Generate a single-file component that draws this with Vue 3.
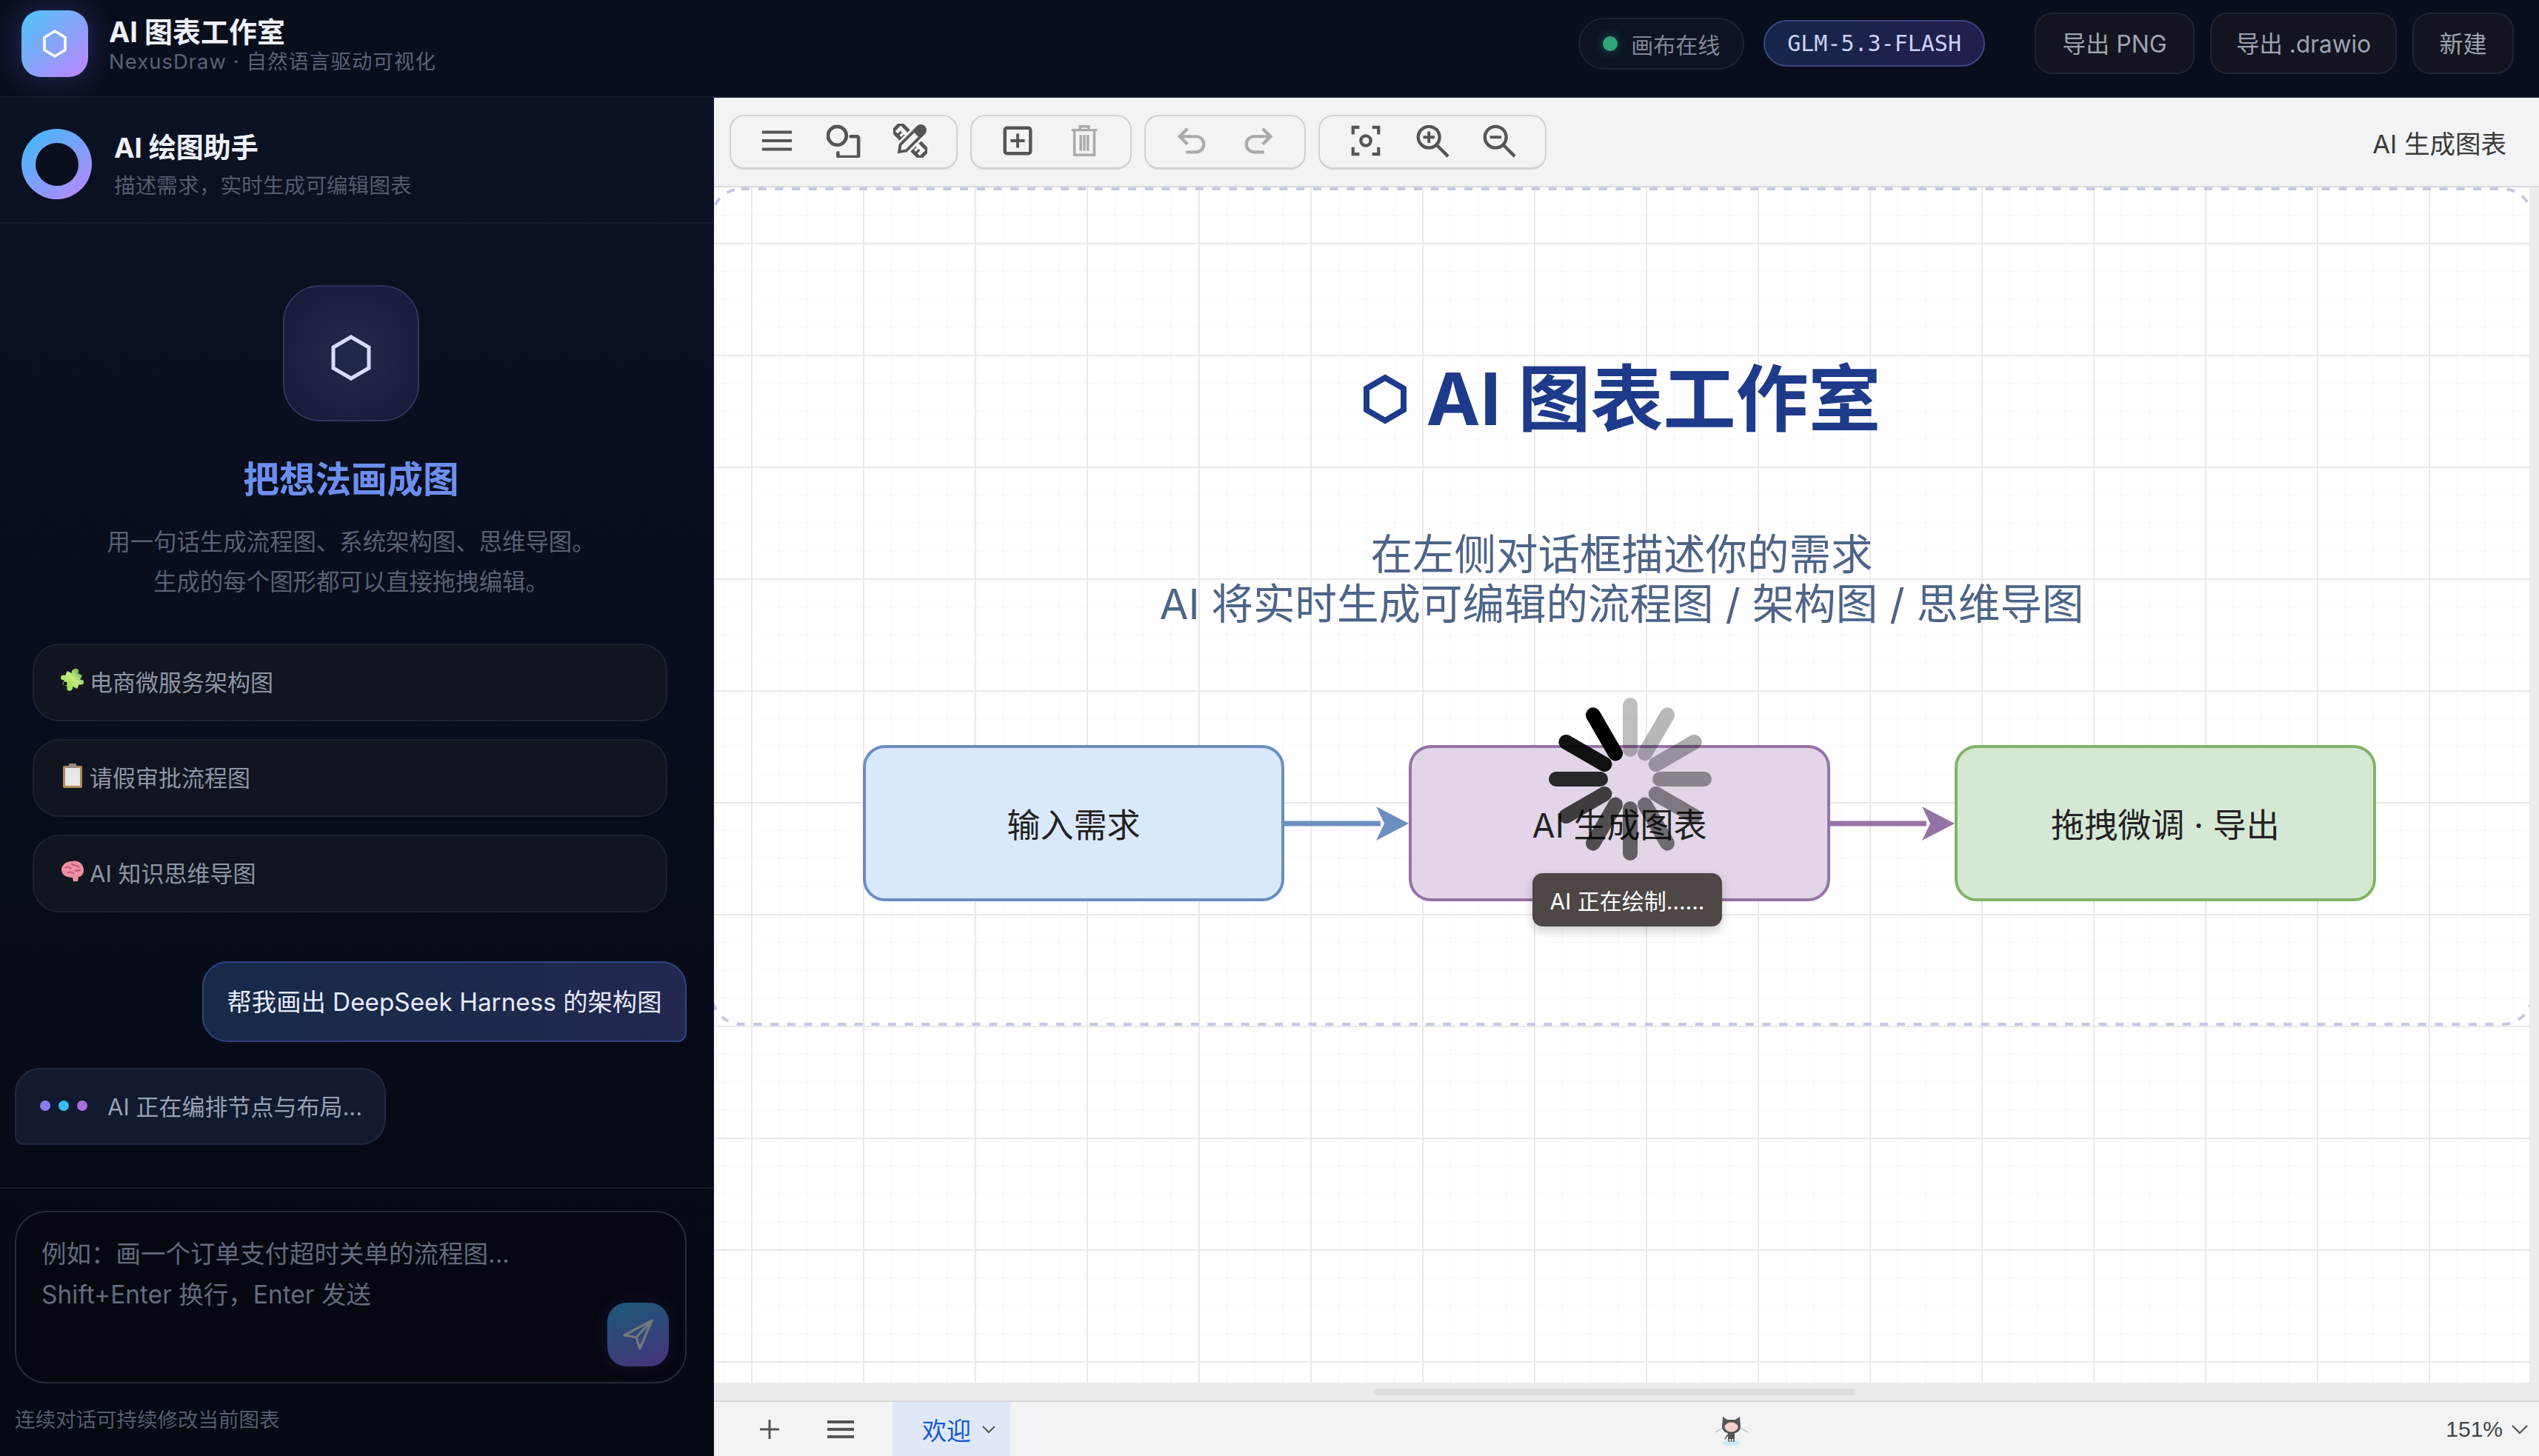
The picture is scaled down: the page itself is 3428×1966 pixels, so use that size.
<script setup>
const samples = [
  { icon: 'puzzle', text: '电商微服务架构图' },
  { icon: 'clipboard', text: '请假审批流程图' },
  { icon: 'brain', text: 'AI 知识思维导图' },
]

const placeholder = '例如：画一个订单支付超时关单的流程图...\nShift+Enter 换行，Enter 发送'

const spokes = [0.25, 0.28, 0.32, 0.38, 0.44, 0.5, 0.56, 0.64, 0.72, 0.82, 0.92, 1]
</script>

<template>
  <div class="app">
    <header class="topbar">
      <div class="logo">
        <svg width="40" height="44" viewBox="0 0 40 44"><path d="M20 5 34 13.5V30.5L20 39 6 30.5V13.5Z" fill="none" stroke="#fff" stroke-width="3.6" /></svg>
      </div>
      <div class="brand">
        <div class="brand-name">AI 图表工作室</div>
        <div class="brand-sub">NexusDraw · 自然语言驱动可视化</div>
      </div>
      <div class="spacer"></div>
      <div class="status"><i class="status-dot"></i>画布在线</div>
      <div class="model">GLM-5.3-FLASH</div>
      <button class="top-btn png">导出 PNG</button>
      <button class="top-btn drawio">导出 .drawio</button>
      <button class="top-btn fresh">新建</button>
    </header>

    <div class="body">
      <aside class="side">
        <div class="side-head">
          <div class="ring"><div class="ring-hole"></div></div>
          <div class="side-text">
            <div class="side-title">AI 绘图助手</div>
            <div class="side-sub">描述需求，实时生成可编辑图表</div>
          </div>
        </div>

        <div class="chat">
          <div class="hero-icon">
            <svg width="60" height="68" viewBox="0 0 60 68"><path d="M30 6 54 20V48L30 62 6 48V20Z" fill="none" stroke="#d6dcfb" stroke-width="5" /></svg>
          </div>
          <div class="hero-title">把想法画成图</div>
          <div class="hero-desc">用一句话生成流程图、系统架构图、思维导图。<br>生成的每个图形都可以直接拖拽编辑。</div>

          <div class="samples">
            <div v-for="s in samples" :key="s.text" class="sample">
              <svg v-if="s.icon === 'puzzle'" class="emoji" width="32" height="34" viewBox="0 0 32 34">
                <defs><linearGradient id="pz" x1="0" y1="1" x2="1" y2="0"><stop offset="0" stop-color="#8fd14f" /><stop offset="0.55" stop-color="#c4ec7a" /><stop offset="1" stop-color="#4f9f58" /></linearGradient></defs>
                <path d="M19 1c3-1 6 1 5 4l-1 2 6 3-3 6c3-1 6 1 5 4s-4 3-6 2l-3 6-6-3c1 3-1 6-4 6s-5-3-3-6l-7-3 3-6c-3 1-6-1-5-4s4-3 6-2l3-6 6 3c-1-3 1-5 4-6Z" fill="url(#pz)" />
                <circle cx="6" cy="21" r="2.600" fill="#10151f" />
              </svg>
              <svg v-else-if="s.icon === 'clipboard'" class="emoji" width="32" height="34" viewBox="0 0 32 34">
                <rect x="3" y="3" width="26" height="30" rx="2" fill="#b08a58" />
                <rect x="6" y="6" width="20" height="24" fill="#e7e7e7" />
                <rect x="11" y="0" width="10" height="6" rx="1" fill="#8d8d8d" />
              </svg>
              <svg v-else class="emoji" width="32" height="34" viewBox="0 0 32 34">
                <path d="M16 3c8-2 15 4 15 12 0 6-4 9-7 9l-1 6h-6l-1-5C7 25 1 21 1 14 1 8 8 2 16 3Z" fill="#ee8fa4" />
                <path d="M6 12c3-3 6-1 8 1M14 6c3 3 8 2 11 5M9 19c3-2 7-2 9 1M19 16c3 0 6 0 8-2" fill="none" stroke="#c75a78" stroke-width="2" />
              </svg>
              <span>{{ s.text }}</span>
            </div>
          </div>

          <div class="msg-user">帮我画出 DeepSeek Harness 的架构图</div>
          <div class="msg-ai">
            <i class="dot d1"></i><i class="dot d2"></i><i class="dot d3"></i>
            <span>AI 正在编排节点与布局...</span>
          </div>
        </div>

        <div class="composer">
          <div class="input-box">
            <textarea class="input" :placeholder="placeholder" rows="3"></textarea>
            <button class="send">
              <svg width="44" height="46" viewBox="0 0 46 46"><path d="M42 3 3 24l17 3 5 16Z M42 3 20 27" fill="none" stroke="#74777c" stroke-width="3.4" stroke-linejoin="round" /></svg>
            </button>
          </div>
          <div class="hint">连续对话可持续修改当前图表</div>
        </div>
      </aside>

      <main class="editor">
        <div class="toolbar">
          <div class="tool-group">
            <button class="tool">
              <svg viewBox="0 0 48 48"><path d="M3 12h42M3 24h42M3 36h42" stroke="#555" stroke-width="4.4" fill="none" /></svg>
            </button>
            <button class="tool">
              <svg viewBox="0 0 48 48"><circle cx="15" cy="17" r="13" fill="none" stroke="#555" stroke-width="4.8" /><path d="M34 18h9a2 2 0 0 1 2 2v25a2 2 0 0 1-2 2H18a2 2 0 0 1-2-2v-4" fill="none" stroke="#555" stroke-width="4.8" stroke-linecap="round" /></svg>
            </button>
            <button class="tool">
              <svg viewBox="0 0 48 48">
                <g transform="rotate(-45 24 24)">
                  <rect x="16" y="-3" width="16" height="54" fill="#f1f3f4" stroke="#555" stroke-width="5" />
                  <path d="M16 6h8M16 13h8M16 35h8M16 42h8" stroke="#555" stroke-width="3.400" />
                </g>
                <g transform="rotate(45 24 24)">
                  <path d="M13 -2h22v40l-11 13-11-13Z" fill="#f1f3f4" />
                  <path d="M16 3a8 8 0 0 1 16 0v9H16Z" fill="#555" />
                  <path d="M18 12v26l6 8 6-8V12" fill="none" stroke="#555" stroke-width="4" />
                </g>
              </svg>
            </button>
          </div>
          <div class="tool-group">
            <button class="tool">
              <svg viewBox="0 0 48 48"><rect x="6" y="6" width="36" height="36" rx="3" fill="none" stroke="#555" stroke-width="4.6" /><path d="M24 14v20M14 24h20" stroke="#555" stroke-width="4" /></svg>
            </button>
            <button class="tool">
              <svg viewBox="0 0 48 48"><path d="M6 9h36M18 8V4h12v4M10 10v34h28V10M19 16v22M24 16v22M29 16v22" fill="none" stroke="#aaa" stroke-width="3.6" /></svg>
            </button>
          </div>
          <div class="tool-group">
            <button class="tool">
              <svg viewBox="0 0 48 48"><path d="M8 18h22a11 11 0 0 1 0 22H16" fill="none" stroke="#aaa" stroke-width="4.4" /><path d="M18 7 7 18l11 11" fill="none" stroke="#aaa" stroke-width="4.4" /></svg>
            </button>
            <button class="tool">
              <svg viewBox="0 0 48 48"><path d="M40 18H18a11 11 0 0 0 0 22h14" fill="none" stroke="#aaa" stroke-width="4.4" /><path d="M30 7l11 11-11 11" fill="none" stroke="#aaa" stroke-width="4.4" /></svg>
            </button>
          </div>
          <div class="tool-group">
            <button class="tool">
              <svg viewBox="0 0 48 48"><path d="M15 5H6v10M33 5h9v10M15 43H6V33M33 43h9V33" fill="none" stroke="#555" stroke-width="4.4" /><circle cx="24" cy="24" r="7" fill="none" stroke="#555" stroke-width="4.4" /></svg>
            </button>
            <button class="tool">
              <svg viewBox="0 0 48 48"><circle cx="19" cy="19" r="15" fill="none" stroke="#555" stroke-width="4.6" /><path d="M30 30l16 16" stroke="#555" stroke-width="4.6" /><path d="M19 11v16M11 19h16" stroke="#555" stroke-width="4" /></svg>
            </button>
            <button class="tool">
              <svg viewBox="0 0 48 48"><circle cx="19" cy="19" r="15" fill="none" stroke="#555" stroke-width="4.6" /><path d="M30 30l16 16" stroke="#555" stroke-width="4.6" /><path d="M11 19h16" stroke="#555" stroke-width="4" /></svg>
            </button>
          </div>
          <div class="spacer"></div>
          <div class="doc-name">AI 生成图表</div>
        </div>

        <div class="canvas-wrap">
          <div class="canvas">
            <svg class="frame" width="2451" height="1132" viewBox="0 0 2451 1132">
              <rect x="-3" y="2" width="2458" height="1128" rx="40" fill="none" stroke="#c2c9e2" stroke-width="4" stroke-dasharray="11 11.7" />
            </svg>

            <h1 class="page-title">
              <svg width="60" height="68" viewBox="0 0 60 68"><path d="M30 5 55 19.5V48.5L30 63 5 48.5V19.5Z" fill="none" stroke="#1e3a8a" stroke-width="8" /></svg>
              <span>AI 图表工作室</span>
            </h1>
            <p class="page-sub">在左侧对话框描述你的需求<br>AI 将实时生成可编辑的流程图 / 架构图 / 思维导图</p>

            <div class="flow">
              <div class="node blue">输入需求</div>
              <svg class="arrow" width="168" height="50" viewBox="0 0 168 50"><path d="M0 25H130" stroke="#6c8ebf" stroke-width="7" /><path d="M168 25 124 2 135 25 124 48Z" fill="#6c8ebf" /></svg>
              <div class="node purple">
                <span>AI 生成图表</span>
                <svg class="spinner" width="240" height="240" viewBox="-120 -120 240 240">
                  <rect v-for="(o, i) in spokes" :key="i" x="-10" y="-110" width="20" height="80" rx="10" fill="#000" :opacity="o" :transform="`rotate(${i * 30})`" />
                </svg>
                <div class="loading-tip">AI 正在绘制......</div>
              </div>
              <svg class="arrow" width="168" height="50" viewBox="0 0 168 50"><path d="M0 25H130" stroke="#9673a6" stroke-width="7" /><path d="M168 25 124 2 135 25 124 48Z" fill="#9673a6" /></svg>
              <div class="node green">拖拽微调 · 导出</div>
            </div>
          </div>
          <div class="v-track"></div>
        </div>

        <div class="h-track"><div class="h-thumb"></div></div>

        <div class="statusbar">
          <svg class="bar-icon plus" width="30" height="30" viewBox="0 0 30 30"><path d="M15 2v26M2 15h26" stroke="#555" stroke-width="3" /></svg>
          <svg class="bar-icon menu" width="36" height="30" viewBox="0 0 36 30"><path d="M0 5h36M0 15h36M0 25h36" stroke="#555" stroke-width="4" /></svg>
          <div class="tab">欢迎<svg width="20" height="12" viewBox="0 0 20 12"><path d="M2 2l8 8 8-8" fill="none" stroke="#555" stroke-width="2" /></svg></div>
          <svg class="cat" width="48" height="44" viewBox="0 0 48 44">
            <ellipse cx="21.500" cy="39.500" rx="12" ry="3.500" fill="#cfe6f3" />
            <path d="M10 4l6 4h11l6-4 1 14c0 5-6 9-12.500 9S9 23 9 18Z" fill="#555" />
            <ellipse cx="21.500" cy="18" rx="9" ry="6.500" fill="#f3d4cc" />
            <path d="M17 26h9v8h-9Z" fill="#555" />
            <path d="M18 33v5M21.500 33v5M25 33v5M17 28l-4 6" stroke="#555" stroke-width="1.600" fill="none" />
            <path d="M10 19 0 25M33 19l11 6" stroke="#aaa" stroke-width="1" fill="none" />
          </svg>
          <div class="zoom-level">151%<svg width="22" height="14" viewBox="0 0 22 14"><path d="M1 2l10 10L21 2" fill="none" stroke="#555" stroke-width="2.2" /></svg></div>
        </div>
      </main>
    </div>
  </div>
</template>

<style scoped>
.app {
  height: 100vh;
  display: flex;
  flex-direction: column;
  font-family: Inter, "Noto Sans CJK SC", sans-serif;
  overflow: hidden;
  background: #070b18;
}

.spacer {
  flex: 1;
}

button {
  font-family: inherit;
}

.topbar {
  height: 132px;
  flex: none;
  display: flex;
  align-items: center;
  padding: 0 34px 13px 29px;
  box-sizing: border-box;
  background: #090e1d;
  border-bottom: 2px solid #161c2e;
}

.logo {
  width: 90px;
  height: 90px;
  border-radius: 26px;
  background: linear-gradient(135deg, #4cc4fa, #c084fc);
  box-shadow: 0 0 44px rgba(110, 120, 255, 0.3);
  display: flex;
  align-items: center;
  justify-content: center;
  margin-right: 28px;
}

.brand {
  padding-top: 5px;
}

.brand-name {
  font-size: 38px;
  font-weight: 700;
  line-height: 44px;
  color: #eef1fb;
}

.brand-sub {
  font-size: 27.5px;
  line-height: 36px;
  letter-spacing: 1px;
  color: #596275;
}

.status {
  height: 70px;
  box-sizing: border-box;
  padding: 0 31px;
  border: 2px solid #1d2333;
  border-radius: 35px;
  background: #0e1322;
  display: flex;
  align-items: center;
  gap: 18px;
  font-size: 30px;
  color: #7f8798;
  margin-right: 26px;
}

.status-dot {
  width: 20px;
  height: 20px;
  border-radius: 50%;
  background: #2fa57a;
  box-shadow: 0 0 14px rgba(47, 165, 122, 0.5);
}

.model {
  height: 63px;
  box-sizing: border-box;
  padding: 0 30px;
  border: 2px solid #3b4585;
  border-radius: 32px;
  background: linear-gradient(90deg, #16264a, #221f4c);
  display: flex;
  align-items: center;
  font-family: "DejaVu Sans Mono", monospace;
  font-size: 30px;
  color: #c9d2f6;
}

.top-btn {
  height: 83px;
  box-sizing: border-box;
  padding: 0 0 4px;
  border: 2px solid #1f2433;
  border-radius: 24px;
  background: #12151f;
  font-size: 32px;
  color: #9da3b0;
  margin-left: 21px;
}

.png {
  width: 216px;
  margin-left: 67px;
}

.drawio {
  width: 252px;
  font-size: 31.5px;
}

.fresh {
  width: 137px;
}

.body {
  flex: 1;
  min-height: 0;
  display: flex;
}

.side {
  width: 964px;
  flex: none;
  display: flex;
  flex-direction: column;
  box-sizing: border-box;
  background: linear-gradient(180deg, #0b1223 0%, #080d1b 45%, #050912 100%);
  border-right: 1px solid #141a2a;
}

.side-head {
  height: 170px;
  flex: none;
  box-sizing: border-box;
  display: flex;
  align-items: center;
  gap: 30px;
  padding: 11px 0 0 29px;
  border-bottom: 2px solid #171d2e;
}

.ring {
  width: 95px;
  height: 95px;
  border-radius: 50%;
  background: linear-gradient(140deg, #38bdf8, #c084fc);
  display: flex;
  align-items: center;
  justify-content: center;
}

.ring-hole {
  width: 58px;
  height: 58px;
  border-radius: 50%;
  background: #0a0f1e;
}

.side-text {
  padding-top: 6px;
}

.side-title {
  font-size: 37px;
  font-weight: 700;
  line-height: 52px;
  color: #eef1fb;
}

.side-sub {
  font-size: 28.7px;
  line-height: 50px;
  color: #535c6e;
}

.chat {
  flex: 1;
  min-height: 0;
  display: flex;
  flex-direction: column;
  align-items: center;
  padding: 83px 15px 0 0;
}

.hero-icon {
  width: 184px;
  height: 184px;
  box-sizing: border-box;
  border: 2px solid #2e3560;
  border-radius: 50px;
  padding-top: 12px;
  background: radial-gradient(circle, #222a50, #171a36);
  display: flex;
  align-items: center;
  justify-content: center;
}

.hero-title {
  margin-top: 48px;
  font-size: 48.5px;
  font-weight: 700;
  line-height: 62px;
  color: #6c8ef0;
}

.hero-desc {
  margin-top: 26px;
  font-size: 31.4px;
  line-height: 54px;
  text-align: center;
  color: #586173;
}

.samples {
  align-self: stretch;
  display: flex;
  flex-direction: column;
  gap: 24px;
  margin: 56px 47px 0 44px;
}

.sample {
  height: 105px;
  box-sizing: border-box;
  border: 2px solid #1c2230;
  border-radius: 36px;
  background: #10151f;
  display: flex;
  align-items: center;
  gap: 7px;
  padding: 0 0 5px 36px;
  font-size: 31px;
  color: #8e95a3;
}

.msg-user {
  align-self: flex-end;
  box-sizing: border-box;
  width: 654px;
  height: 109px;
  margin: 66px 21px 0 0;
  padding-bottom: 4px;
  border: 2px solid #2f4383;
  border-radius: 34px 34px 12px 34px;
  background: linear-gradient(90deg, #182a48, #222850);
  display: flex;
  align-items: center;
  justify-content: center;
  font-size: 33.3px;
  white-space: nowrap;
  color: #e6ebfa;
}

.msg-ai {
  align-self: flex-start;
  height: 104px;
  box-sizing: border-box;
  margin: 35px 0 0 20px;
  padding: 0 30px 3px 32px;
  border: 2px solid #1f2940;
  border-radius: 34px 34px 34px 12px;
  background: #111a2e;
  display: flex;
  align-items: center;
  font-size: 31px;
  color: #98a2b6;
}

.msg-ai span {
  margin-left: 16px;
}

.dot {
  width: 14px;
  height: 14px;
  border-radius: 50%;
  margin-right: 11px;
}

.d1 {
  background: #8b7cf6;
}

.d2 {
  background: #38bdf8;
}

.d3 {
  background: #a86fe0;
}

.composer {
  flex: none;
  height: 363px;
  box-sizing: border-box;
  border-top: 2px solid #171d2e;
  padding: 30px 36px 0 20px;
}

.input-box {
  position: relative;
  height: 233px;
  box-sizing: border-box;
  border: 2px solid #252b3b;
  border-radius: 42px;
  background: #050811;
}

.input {
  display: block;
  width: 100%;
  height: 100%;
  box-sizing: border-box;
  padding: 29px 34px 0;
  border: 0;
  outline: 0;
  resize: none;
  background: transparent;
  font-family: inherit;
  font-size: 33.5px;
  line-height: 55px;
}

.input::placeholder {
  color: #636b7c;
  opacity: 1;
}

.send {
  position: absolute;
  right: 22px;
  bottom: 21px;
  width: 83px;
  height: 86px;
  padding: 0;
  border: 0;
  border-radius: 26px;
  background: linear-gradient(160deg, #1a5a7a, #47327a);
  box-shadow: 0 0 20px rgba(90, 70, 170, 0.2);
  display: flex;
  align-items: center;
  justify-content: center;
}

.hint {
  margin-top: 31px;
  font-size: 27.5px;
  line-height: 36px;
  color: #555d6c;
}

.editor {
  flex: 1;
  min-width: 0;
  display: flex;
  flex-direction: column;
  background: #f1f3f4;
}

.toolbar {
  height: 121px;
  flex: none;
  box-sizing: border-box;
  display: flex;
  align-items: center;
  gap: 17px;
  padding: 0 44px 0 21px;
  border-bottom: 2px solid #dcdcdc;
}

.tool-group {
  height: 74px;
  box-sizing: border-box;
  display: flex;
  align-items: center;
  padding: 0 17px;
  border: 2px solid #d2d2d2;
  border-bottom-width: 3px;
  border-radius: 20px;
}

.tool {
  width: 90px;
  height: 48px;
  padding: 0;
  border: 0;
  background: transparent;
  display: flex;
  justify-content: center;
}

.tool svg {
  width: 46px;
  height: 46px;
}

.doc-name {
  font-size: 34.5px;
  color: #3a3a3a;
}

.canvas-wrap {
  flex: 1;
  min-height: 0;
  display: flex;
}

.canvas {
  flex: 1;
  min-width: 0;
  position: relative;
  overflow: hidden;
  display: flex;
  flex-direction: column;
  align-items: center;
  background-color: #fff;
  background-image:
    linear-gradient(#e9e9e9 2px, transparent 2px),
    linear-gradient(90deg, #e9e9e9 2px, transparent 2px),
    linear-gradient(#f6f6f6 1px, transparent 1px),
    linear-gradient(90deg, #f6f6f6 1px, transparent 1px);
  background-size: 151px 151px, 151px 151px, 37.75px 37.75px, 37.75px 37.75px;
  background-position: 0 75px, 50px 0, 0 75px, 50px 0;
}

.v-track {
  width: 13px;
  flex: none;
  background: #ececec;
}

.frame {
  position: absolute;
  left: 0;
  top: 0;
}

.page-title {
  margin: 226px 0 0;
  display: flex;
  align-items: center;
  gap: 26px;
  font-size: 98px;
  font-weight: 700;
  line-height: 120px;
  color: #1e3a8a;
}

.page-sub {
  margin: 116px 0 0;
  font-size: 56.5px;
  line-height: 67px;
  text-align: center;
  color: #4d6488;
}

.flow {
  margin: 157px 6px 0 0;
  display: flex;
  align-items: center;
}

.arrow {
  display: block;
  margin: 0;
  width: 168px;
}

.node {
  position: relative;
  width: 569px;
  height: 211px;
  box-sizing: border-box;
  border-radius: 30px;
  border: 4px solid;
  display: flex;
  align-items: center;
  justify-content: center;
  font-size: 45px;
  color: #222;
}

.blue {
  background: #dae8fc;
  border-color: #6c8ebf;
}

.purple {
  background: #e1d5e7;
  border-color: #9673a6;
}

.green {
  background: #d5e8d4;
  border-color: #82b366;
}

.spinner {
  position: absolute;
  left: 175px;
  top: -78px;
}

.loading-tip {
  position: absolute;
  left: 163px;
  top: 169px;
  width: 256px;
  height: 72px;
  border-radius: 14px;
  background: #4f4646;
  box-shadow: 0 6px 14px rgba(0, 0, 0, 0.2);
  display: flex;
  align-items: center;
  justify-content: center;
  font-size: 30px;
  color: #fff;
}

.h-track {
  height: 26px;
  flex: none;
  position: relative;
  box-sizing: border-box;
  background: #ebebeb;
  border-bottom: 2px solid #d8d8d8;
}

.h-thumb {
  position: absolute;
  left: 890px;
  top: 8px;
  width: 651px;
  height: 9px;
  border-radius: 4px;
  background: #dedede;
}

.statusbar {
  height: 73px;
  flex: none;
  position: relative;
  display: flex;
  align-items: center;
  padding-left: 60px;
  background: #f1f3f4;
}

.menu {
  margin-left: 63px;
}

.tab {
  height: 100%;
  margin-left: 52px;
  width: 159px;
  box-sizing: border-box;
  padding-left: 40px;
  display: flex;
  align-items: center;
  gap: 14px;
  background: #e0e8f7;
  font-size: 33px;
  color: #1558d6;
}

.cat {
  position: absolute;
  left: 1352px;
  top: 16px;
}

.zoom-level {
  margin-left: auto;
  margin-right: 15px;
  display: flex;
  align-items: center;
  gap: 12px;
  font-family: "Liberation Sans", sans-serif;
  font-size: 30px;
  color: #444;
}
</style>

<style>
body {
  background: #070b18;
  overflow: hidden;
}
</style>
